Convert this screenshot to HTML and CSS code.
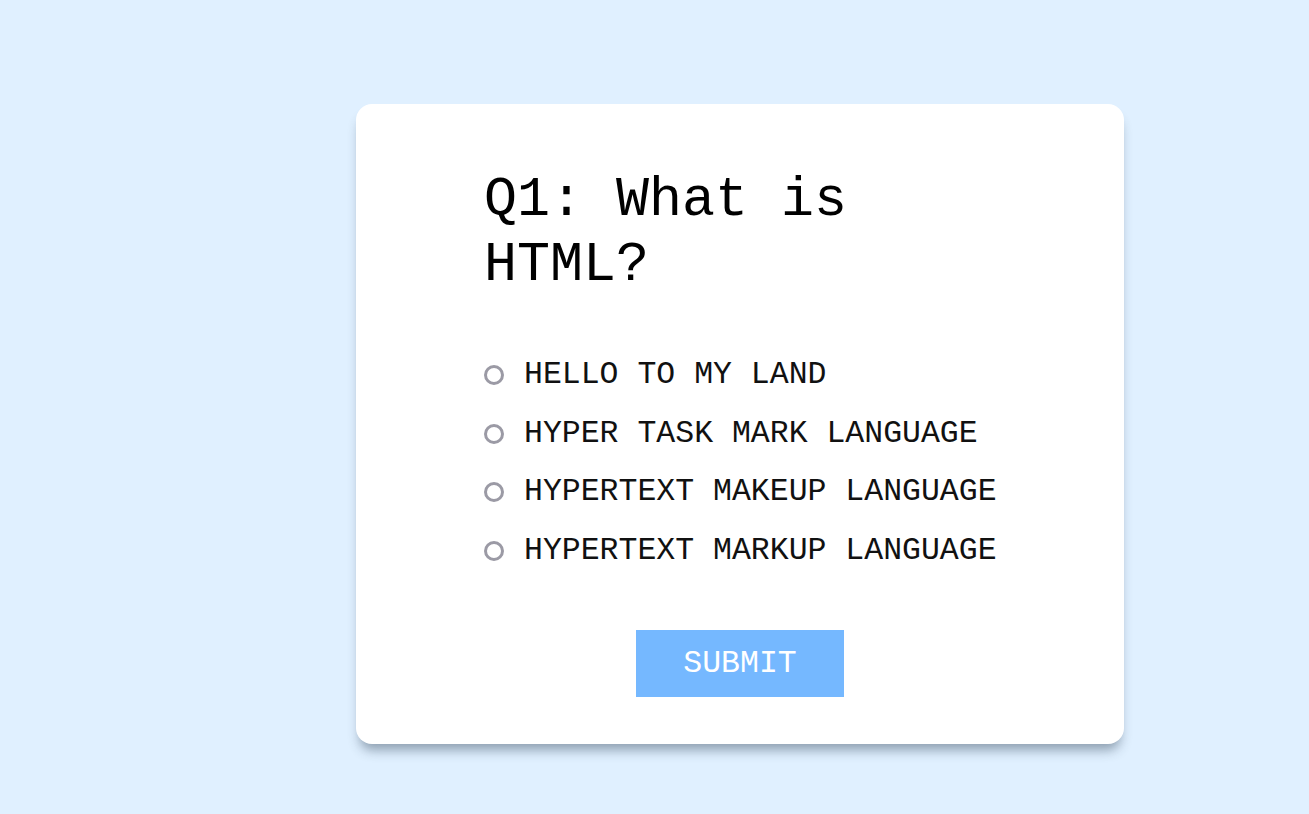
FILE: index.html
```html
<!DOCTYPE html>
<html>
<head>
<meta charset="utf-8">
<link rel="stylesheet" href="styles.css">
</head>
<body>
<main class="page">
  <section class="card">
    <div class="content">
      <h1 class="question">Q1: What is HTML?</h1>
      <ul class="options">
        <li class="option"><span class="radio"></span><span class="label">HELLO TO MY LAND</span></li>
        <li class="option"><span class="radio"></span><span class="label">HYPER TASK MARK LANGUAGE</span></li>
        <li class="option"><span class="radio"></span><span class="label">HYPERTEXT MAKEUP LANGUAGE</span></li>
        <li class="option"><span class="radio"></span><span class="label">HYPERTEXT MARKUP LANGUAGE</span></li>
      </ul>
    </div>
    <div class="actions">
      <button class="submit">SUBMIT</button>
    </div>
  </section>
</main>
</body>
</html>
```
FILE: styles.css
```css
html, body {
  margin: 0;
  padding: 0;
  background: #e0f0ff;
  font-family: "Courier New", "Liberation Mono", monospace;
}
.page {
  display: flex;
  padding: 104px 0 0 356px;
  min-height: 814px;
  box-sizing: border-box;
}
.card {
  width: 768px;
  height: 640px;
  box-sizing: border-box;
  background: #ffffff;
  border-radius: 16px;
  box-shadow: 0 10px 12px -4px rgba(40, 60, 80, 0.45);
  padding: 64px 128px 0;
  display: flex;
  flex-direction: column;
}
.question {
  margin: 0;
  font-weight: normal;
  font-size: 55px;
  line-height: 65px;
  color: #000;
  width: 440px;
}
.options {
  list-style: none;
  margin: 59px 0 0;
  padding: 0;
  display: flex;
  flex-direction: column;
  gap: 22.5px;
}
.option {
  display: flex;
  align-items: center;
  gap: 20px;
  font-size: 31.5px;
  line-height: 36px;
  color: #111;
  white-space: nowrap;
}
.radio {
  width: 14px;
  height: 14px;
  border: 3px solid #9b9aa5;
  border-radius: 50%;
  flex: none;
}
.actions {
  display: flex;
  justify-content: center;
  margin-top: 61px;
}
.submit {
  font-family: inherit;
  font-size: 31.5px;
  color: #ffffff;
  background: #75b8ff;
  border: none;
  width: 208px;
  height: 67px;
  padding: 0;
}
```
